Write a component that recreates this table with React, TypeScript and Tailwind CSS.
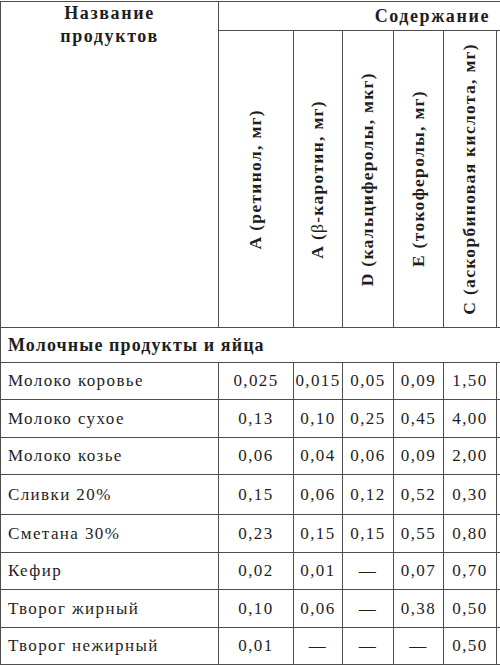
const cols = [
  "A (ретинол, мг)",
  "A (β-каротин, мг)",
  "D (кальциферолы, мкг)",
  "E (токоферолы, мг)",
  "C (аскорбиновая кислота, мг)",
];

const rows: [string, string[]][] = [
  ["Молоко коровье", ["0,025", "0,015", "0,05", "0,09", "1,50"]],
  ["Молоко сухое", ["0,13", "0,10", "0,25", "0,45", "4,00"]],
  ["Молоко козье", ["0,06", "0,04", "0,06", "0,09", "2,00"]],
  ["Сливки 20%", ["0,15", "0,06", "0,12", "0,52", "0,30"]],
  ["Сметана 30%", ["0,23", "0,15", "0,15", "0,55", "0,80"]],
  ["Кефир", ["0,02", "0,01", "—", "0,07", "0,70"]],
  ["Творог жирный", ["0,10", "0,06", "—", "0,38", "0,50"]],
  ["Творог нежирный", ["0,01", "—", "—", "—", "0,50"]],
];

function VerticalLabel({ text }: { text: string }) {
  const parts = text.split("β");
  return (
    <div className="flex items-center justify-center bg-white">
      <span className="rotate-180 whitespace-nowrap text-[17.5px] leading-none font-bold tracking-[1.3px] [writing-mode:vertical-rl]">
        {parts.length > 1 ? (
          <>
            {parts[0]}
            <span className="font-normal">β</span>
            {parts[1]}
          </>
        ) : (
          text
        )}
      </span>
    </div>
  );
}

export default function App() {
  return (
    <div className="h-[666px] w-[500px] overflow-hidden bg-white text-[#1e1e1e] [font-family:'Liberation_Serif',serif]">
      <div className="mt-px grid w-max grid-cols-[217px_74px_48px_50px_49px_52px_20px] grid-rows-[28px_296px_34px_36px_37px_36px_39px_37px_36px_37px_36px] gap-px bg-[#4d4d4d] py-px pl-px">
        <div className="row-span-2 bg-white text-center text-[18px] leading-[23px] font-bold tracking-[1.6px]">
          Название
          <br />
          продуктов
        </div>
        <div className="col-span-6 flex items-center justify-end bg-white pr-[27px] text-[18px] font-bold tracking-[1.6px]">
          Содержание
        </div>
        {cols.map((c) => (
          <VerticalLabel key={c} text={c} />
        ))}
        <div className="bg-white" />

        <div className="col-span-7 flex items-center bg-white pl-[7px] text-[18px] font-bold tracking-[1.1px]">
          Молочные продукты и яйца
        </div>

        {rows.map(([name, vals]) => (
          <div key={name} className="contents">
            <div className="flex items-center bg-white pl-[7px] text-[17px] tracking-[1.4px]">
              {name}
            </div>
            {vals.map((v, i) => (
              <div
                key={i}
                className="flex items-center justify-center bg-white text-[17px] tracking-[1.4px]"
              >
                {v}
              </div>
            ))}
            <div className="bg-white" />
          </div>
        ))}
      </div>
    </div>
  );
}
